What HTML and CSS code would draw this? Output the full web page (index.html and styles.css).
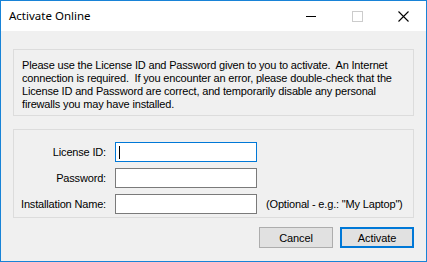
FILE: index.html
```html
<!DOCTYPE html>
<html>
<head>
<meta charset="utf-8">
<link rel="stylesheet" href="styles.css">
</head>
<body>
<div class="window">
  <div class="titlebar">
    <div class="title">Activate Online</div>
    <div class="controls">
      <div class="ctl">
        <svg width="10" height="10" viewBox="0 0 10 10"><rect x="0" y="5" width="10" height="1" fill="#000"/></svg>
      </div>
      <div class="ctl">
        <svg width="11" height="11" viewBox="0 0 11 11"><rect x="0.5" y="0.5" width="10" height="10" fill="none" stroke="#cccccc" stroke-width="1"/></svg>
      </div>
      <div class="ctl">
        <svg width="11" height="11" viewBox="0 0 11 11"><path d="M0.5 0.5 L10.5 10.5 M10.5 0.5 L0.5 10.5" stroke="#000" stroke-width="1.1" fill="none"/></svg>
      </div>
    </div>
  </div>
  <div class="client">
    <div class="group info">
      <p>Please use the License ID and Password given to you to activate.&nbsp; An Internet<br>connection is required.&nbsp; If you encounter an error, please double-check that the<br>License ID and Password are correct, and temporarily disable any personal<br>firewalls you may have installed.</p>
    </div>
    <div class="group form">
      <div class="row">
        <label class="lbl">License ID:</label>
        <div class="field focus"><span class="caret"></span></div>
      </div>
      <div class="row">
        <label class="lbl">Password:</label>
        <div class="field"></div>
      </div>
      <div class="row">
        <label class="lbl">Installation Name:</label>
        <div class="field"></div>
        <span class="hint">(Optional - e.g.: "My Laptop")</span>
      </div>
    </div>
    <div class="buttons">
      <button class="btn">Cancel</button>
      <button class="btn default">Activate</button>
    </div>
  </div>
</div>
</body>
</html>
```
FILE: styles.css
```css
html, body {
  margin: 0;
  padding: 0;
  background: #f0f0f0;
}
.window {
  width: 427px;
  height: 262px;
  box-sizing: border-box;
  border: 1px solid #1883d7;
  background: #f0f0f0;
  display: flex;
  flex-direction: column;
  font-family: "Liberation Sans", Arial, sans-serif;
  font-size: 11px;
  letter-spacing: -0.17px;
  color: #000;
}
.titlebar {
  height: 30px;
  background: #fff;
  display: flex;
  align-items: center;
  justify-content: space-between;
  flex: none;
}
.title {
  font-family: "Noto Sans", "Open Sans", sans-serif;
  font-size: 11.5px;
  letter-spacing: 0;
  padding-left: 8px;
  padding-bottom: 1px;
  color: #000;
}
.controls {
  display: flex;
  height: 30px;
}
.ctl {
  width: 46px;
  display: flex;
  align-items: center;
  justify-content: center;
}
.controls svg { display: block; }
.client {
  padding: 18px 12px 0 12px;
  display: flex;
  flex-direction: column;
}
.group {
  border: 1px solid #dcdcdc;
  box-sizing: border-box;
}
.info {
  height: 67px;
  padding: 9px 6px 0 8px;
}
.info p {
  margin: 0;
  line-height: 13px;
  white-space: nowrap;
}
.form {
  margin-top: 13px;
  height: 89px;
  padding-top: 12px;
  display: flex;
  flex-direction: column;
  gap: 6px;
}
.row {
  display: flex;
  align-items: center;
  height: 20px;
}
.lbl {
  width: 92px;
  text-align: right;
  margin-right: 9px;
  flex: none;
}
.field {
  width: 142px;
  height: 20px;
  box-sizing: border-box;
  border: 1px solid #7a7a7a;
  background: #fff;
  flex: none;
  display: flex;
  align-items: center;
}
.field.focus {
  border-color: #0078d7;
}
.caret {
  width: 1px;
  height: 13px;
  background: #000;
  margin-left: 3px;
}
.hint {
  margin-left: 9px;
}
.buttons {
  margin-top: 9px;
  display: flex;
  justify-content: flex-end;
  gap: 7px;
}
.btn {
  width: 74px;
  height: 21px;
  box-sizing: border-box;
  border: 1px solid #adadad;
  background: #e1e1e1;
  font-family: "Liberation Sans", Arial, sans-serif;
  font-size: 11px;
  letter-spacing: -0.1px;
  color: #000;
  padding: 0;
  margin: 0;
}
.btn.default {
  border: 2px solid #0078d7;
}
```
